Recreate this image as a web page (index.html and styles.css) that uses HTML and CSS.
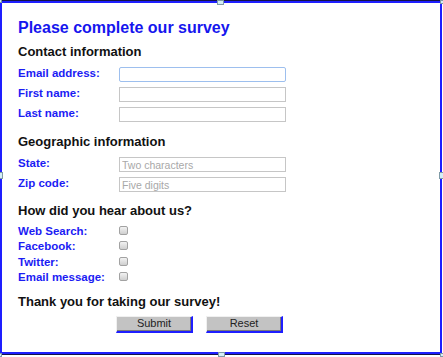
FILE: index.html
```html
<!DOCTYPE html>
<html>
<head>
<meta charset="utf-8">
<title>Survey</title>
<link rel="stylesheet" href="styles.css">
</head>
<body>
<div class="window">
  <form class="frame">
    <h1 class="title">Please complete our survey</h1>
    <h2 class="section">Contact information</h2>
    <div class="fields">
      <label class="lbl">Email address:</label><input class="txt focused" type="text">
      <label class="lbl">First name:</label><input class="txt" type="text">
      <label class="lbl">Last name:</label><input class="txt" type="text">
    </div>
    <h2 class="section geo">Geographic information</h2>
    <div class="fields">
      <label class="lbl">State:</label><input class="txt" type="text" placeholder="Two characters">
      <label class="lbl">Zip code:</label><input class="txt" type="text" placeholder="Five digits">
    </div>
    <h2 class="section hear">How did you hear about us?</h2>
    <div class="checks">
      <label class="lbl">Web Search:</label><input class="cb" type="checkbox">
      <label class="lbl">Facebook:</label><input class="cb" type="checkbox">
      <label class="lbl">Twitter:</label><input class="cb" type="checkbox">
      <label class="lbl">Email message:</label><input class="cb" type="checkbox">
    </div>
    <h2 class="section thanks">Thank you for taking our survey!</h2>
    <div class="buttons">
      <button class="btn" type="button">Submit</button>
      <button class="btn" type="button">Reset</button>
    </div>
  </form>
  <span class="handle h-tl"></span>
  <span class="handle h-tc"></span>
  <span class="handle h-tr"></span>
  <span class="handle h-ml"></span>
  <span class="handle h-mr"></span>
  <span class="handle h-bl"></span>
  <span class="handle h-bc"></span>
  <span class="handle h-br"></span>
</div>
</body>
</html>
```

FILE: styles.css
```css
* { box-sizing: border-box; }
html, body { margin: 0; padding: 0; background: #fff; }
body {
  font-family: "Liberation Sans", Arial, sans-serif;
  width: 443px;
  height: 357px;
  overflow: hidden;
}
.window {
  position: relative;
  width: 442px;
  height: 355px;
  border-top: 1px solid #12124a;
  border-bottom: 1px solid #12124a;
}
.frame {
  height: 100%;
  margin: 0;
  border: 2px solid #1e1eff;
  padding: 15px 16px 0 16px;
}
.title {
  margin: 0;
  font-size: 16px;
  line-height: 20px;
  font-weight: bold;
  color: #1616ee;
}
.section {
  margin: 6px 0 0;
  font-size: 13px;
  line-height: 16px;
  font-weight: bold;
  color: #111;
}
.geo { margin-top: 12px; }
.hear { margin-top: 11px; }
.thanks { margin-top: 8px; }
.fields {
  display: grid;
  grid-template-columns: 101px 167px;
  row-gap: 5px;
  margin-top: 7px;
}
.lbl {
  font-size: 11.5px;
  line-height: 13px;
  font-weight: bold;
  color: #1c1cf4;
}
.txt {
  width: 167px;
  height: 15px;
  margin: 0;
  border: 1px solid #c6c6c6;
  padding: 0 2px;
  font: 10.5px "Liberation Sans", Arial, sans-serif;
  color: #333;
  background: #fff;
  outline: none;
}
.txt::placeholder { color: #a8a8a8; }
.txt.focused { border-color: #9dbfee; border-radius: 2px; }
.checks {
  display: grid;
  grid-template-columns: 101px 20px;
  grid-auto-rows: 15.4px;
  margin-top: 5px;
}
.checks .lbl { line-height: 15.4px; }
.cb {
  appearance: none;
  -webkit-appearance: none;
  width: 9px;
  height: 9px;
  margin: 2px 0 0 0;
  border: 1px solid #a2a2a2;
  border-radius: 2px;
  background: linear-gradient(#f2f2f2, #cfcfcf);
}
.buttons {
  display: flex;
  gap: 13px;
  margin: 6px 0 0 98px;
}
.btn {
  width: 77px;
  height: 17px;
  padding: 0;
  margin: 0;
  background: #c3c3c3;
  border-top: 1px solid #f0f0f0;
  border-left: 1px solid #f0f0f0;
  border-right: 2px solid #1e1eff;
  border-bottom: 2px solid #1e1eff;
  box-shadow: inset -1px -1px 0 #7a7a7a;
  font: 11px "Liberation Sans", Arial, sans-serif;
  line-height: 13px;
  color: #222;
}
.handle {
  position: absolute;
  background: #d4eef6;
  border: 1px solid #7f9aa6;
}
.h-tc { left: 217px; top: -1px; width: 7px; height: 5px; }
.h-bc { left: 218px; bottom: -3px; width: 7px; height: 5px; }
.h-ml { left: -2px; top: 171px; width: 5px; height: 7px; }
.h-mr { right: -2px; top: 171px; width: 5px; height: 7px; }
.h-tl { left: -2px; top: -2px; width: 4px; height: 4px; }
.h-tr { right: -2px; top: -1px; width: 4px; height: 4px; }
.h-bl { left: -2px; bottom: -3px; width: 4px; height: 4px; }
.h-br { right: -2px; bottom: -3px; width: 4px; height: 4px; }
```
